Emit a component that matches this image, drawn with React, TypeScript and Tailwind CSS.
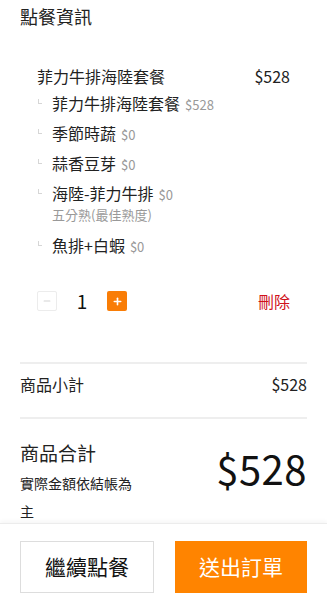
import { Minus, Plus } from 'lucide-react';

type SubItem = { name: string; price: string; note?: string };

const subItems: SubItem[] = [
  { name: '菲力牛排海陸套餐', price: '$528' },
  { name: '季節時蔬', price: '$0' },
  { name: '蒜香豆芽', price: '$0' },
  { name: '海陸-菲力牛排', price: '$0', note: '五分熟(最佳熟度)' },
  { name: '魚排+白蝦', price: '$0' },
];

const font = { fontFamily: '"Noto Sans CJK TC", "Noto Sans", sans-serif' };

function Corner() {
  return <span className="mr-[10px] ml-[1px] mt-[6px] block h-[5px] w-[4px] shrink-0 border-b border-l border-[#d6d6d6]" />;
}

export default function App() {
  return (
    <div className="flex h-screen flex-col bg-white text-[#222]" style={font}>
      <div className="flex-1 overflow-hidden px-5">
        <h2 className="pt-[3px] text-[18px] leading-[27px] text-[#222]">點餐資訊</h2>

        <div className="mx-[17px] mt-[34px]">
          <div className="flex h-[24px] items-center justify-between text-[16px]">
            <span>菲力牛排海陸套餐</span>
            <span>$528</span>
          </div>

          <div className="mt-[5px]">
            {subItems.map((s) => (
              <div key={s.name} className="flex">
                <Corner />
                <div className={s.note ? 'h-[52px]' : 'h-[30px]'}>
                  <div className="flex h-[20px] items-baseline gap-[5px]">
                    <span className="text-[16px] leading-[20px]">{s.name}</span>
                    <span className="text-[13px] leading-[20px] text-[#999]">{s.price}</span>
                  </div>
                  {s.note && <div className="mt-[2px] text-[13px] leading-[20px] text-[#999]">{s.note}</div>}
                </div>
              </div>
            ))}
          </div>

          <div className="mt-[26px] flex h-[20px] items-center">
            <button className="flex h-[20px] w-[20px] items-center justify-center rounded-[2px] border border-[#ececec] bg-white text-[#d4d4d4]">
              <Minus size={10} strokeWidth={2.5} />
            </button>
            <span className="w-[50px] text-center text-[19px] leading-[20px] text-[#111]">1</span>
            <button className="flex h-[20px] w-[20px] items-center justify-center rounded-[2px] bg-[#f97d06] text-white">
              <Plus size={11} strokeWidth={3.5} />
            </button>
            <span className="ml-auto text-[16px] text-[#d0121b]">刪除</span>
          </div>
        </div>

        <div className="mt-[51px] h-[2px] bg-[#eeeeee]" />

        <div className="flex h-[40px] items-center justify-between text-[16px]">
          <span>商品小計</span>
          <span>$528</span>
        </div>

        <div className="mt-[13px] h-[2px] bg-[#eeeeee]" />

        <div className="mt-[20px] flex items-start justify-between">
          <div className="w-[118px]">
            <div className="text-[19px] leading-[28px]">商品合計</div>
            <div className="mt-[2px] text-[14px] leading-[28px]">實際金額依結帳為主</div>
          </div>
          <div className="mt-[4px] text-[40px] leading-[50px] tracking-[0.5px] text-[#111]">$528</div>
        </div>
      </div>

      <div className="flex h-[77px] shrink-0 gap-[21px] border-t border-[#ececec] bg-white px-5 pt-[17px] shadow-[0_-2px_4px_rgba(0,0,0,0.04)]">
        <button className="h-[52px] flex-1 border border-[#dddddd] bg-white text-[21px] text-[#111]">繼續點餐</button>
        <button className="h-[52px] flex-1 bg-[#ff8400] text-[21px] text-white">送出訂單</button>
      </div>
    </div>
  );
}
